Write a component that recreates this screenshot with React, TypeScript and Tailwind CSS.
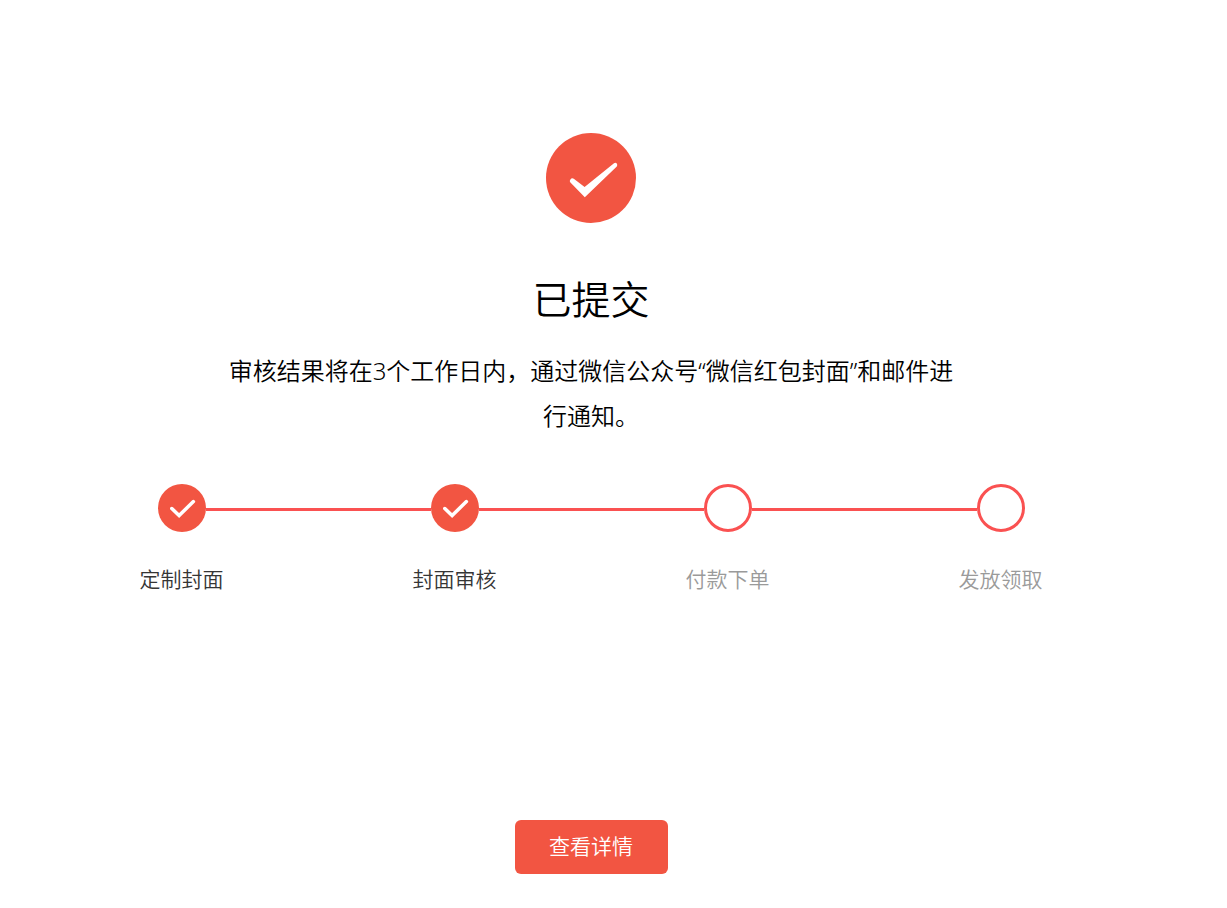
interface Step {
  label: string;
  done: boolean;
}

const steps: Step[] = [
  { label: '定制封面', done: true },
  { label: '封面审核', done: true },
  { label: '付款下单', done: false },
  { label: '发放领取', done: false },
];

function SuccessIcon() {
  return (
    <svg className="size-[90px]" viewBox="0 0 90 90" aria-hidden="true">
      <circle cx="45" cy="45" r="45" fill="#f25542" />
      <path
        d="M24.2 49.2 Q23.2 47.8 24.4 46.4 Q25.8 44.4 27.8 45.7 L38.6 54 L68 30.2 Q69.6 29.2 70.8 30.6 Q71.8 32.2 70.8 33.6 L38.8 64.2 Z"
        fill="#fff"
      />
    </svg>
  );
}

function StepCheck() {
  return (
    <svg className="size-12" viewBox="0 0 48 48" aria-hidden="true">
      <circle cx="24" cy="24" r="24" fill="#f25542" />
      <path
        d="M13.8 24.5 L21.1 31.5 L35.4 17.6"
        fill="none"
        stroke="#fff"
        strokeWidth="3.5"
        strokeLinecap="round"
      />
    </svg>
  );
}

function Connector({ hidden }: { hidden: boolean }) {
  return (
    <span
      className={`h-1.5 flex-1 border-b-3 ${
        hidden ? 'border-transparent' : 'border-[#fa5151]'
      }`}
    />
  );
}

export default function App() {
  return (
    <main className="flex flex-col items-center pt-[133px] pr-[45px] pb-8 font-['Noto_Sans','Noto_Sans_CJK_SC',sans-serif] text-black">
      <SuccessIcon />
      <h1 className="mt-[46px] text-[39px] leading-[60px] font-[350]">已提交</h1>
      <p className="mt-[19px] max-w-[740px] text-center text-2xl leading-[45px] font-[350]">
        审核结果将在3个工作日内，通过微信公众号“微信红包封面”和邮件进行通知。
      </p>

      <ol className="mt-[46px] grid w-full max-w-[1092px] grid-cols-4">
        {steps.map((step, index) => (
          <li key={step.label} className="flex flex-col items-center">
            <div className="flex w-full items-center">
              <Connector hidden={index === 0} />
              {step.done ? (
                <StepCheck />
              ) : (
                <span className="size-12 rounded-full border-3 border-[#fa5151]" />
              )}
              <Connector hidden={index === steps.length - 1} />
            </div>
            <span
              className={`mt-[31px] text-[21px] leading-8 font-[350] ${
                step.done ? 'text-[#353535]' : 'text-[#9a9a9a]'
              }`}
            >
              {step.label}
            </span>
          </li>
        ))}
      </ol>

      <button
        type="button"
        className="mt-[225px] h-[54px] w-[153px] cursor-pointer rounded-md bg-[#f25542] text-[21px] font-[350] text-white hover:bg-[#e04a38]"
      >
        查看详情
      </button>
    </main>
  );
}
